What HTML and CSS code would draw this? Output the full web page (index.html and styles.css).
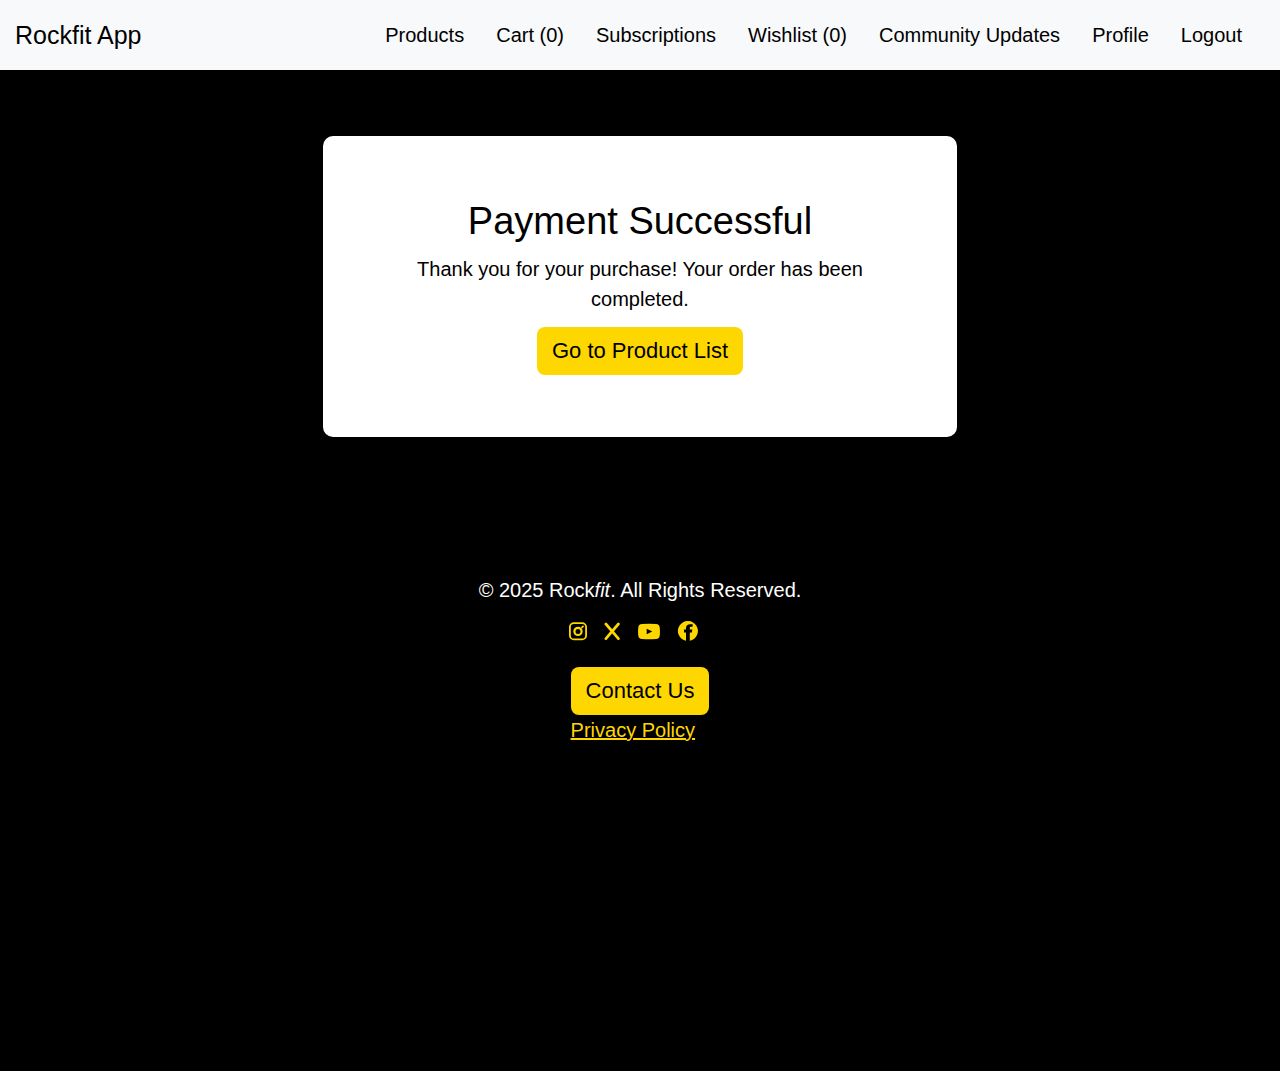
FILE: index.html
```html
<!DOCTYPE html>
<html lang="en">
<head>
<meta charset="utf-8">
<meta name="viewport" content="width=device-width, initial-scale=1">
<title>Rockfit App</title>
<link rel="stylesheet" href="styles.css">
</head>
<body>
<header class="navbar">
  <a class="brand" href="#">Rockfit App</a>
  <nav class="nav">
    <a href="#">Products</a>
    <a href="#">Cart (0)</a>
    <a href="#">Subscriptions</a>
    <a href="#">Wishlist (0)</a>
    <a href="#">Community Updates</a>
    <a href="#">Profile</a>
    <a href="#">Logout</a>
  </nav>
</header>
<main class="main">
  <section class="card">
    <h1>Payment Successful</h1>
    <p>Thank you for your purchase! Your order has been completed.</p>
    <button class="btn" type="button">Go to Product List</button>
  </section>
</main>
<footer class="footer">
  <p class="copyright">© 2025 Rock<em>fit</em>. All Rights Reserved.</p>
  <div class="social">
    <a href="#" aria-label="Instagram"><svg width="20" height="20" viewBox="0 0 20 20" fill="none" stroke="currentColor" stroke-width="1.8"><rect x="1.900" y="2.200" width="16.200" height="16.200" rx="4"/><circle cx="10" cy="10.400" r="3.600" stroke-width="2.200"/><path d="m14 6.400 1-1" stroke-linecap="round"/></svg></a>
    <a href="#" aria-label="X"><svg width="16" height="20" viewBox="0 0 16 20" fill="none" stroke="currentColor" stroke-width="2.700" stroke-linecap="round"><path d="M1.900 3 14.400 17.600M14.400 3 1.900 17.600"/></svg></a>
    <a href="#" aria-label="YouTube"><svg width="24" height="20" viewBox="-2 0 24 20" fill="currentColor"><path fill-rule="evenodd" d="M4 3Q11 2.600 18 3 21.500 3.200 21.700 6.500 22.200 10.500 21.700 14.500 21.500 17.700 18 18 11 18.400 4 18 .5 17.700.3 14.500-.2 10.500.3 6.500.5 3.200 4 3ZM8.700 7.700v5.600l5.500-2.800Z"/></svg></a>
    <a href="#" aria-label="Facebook"><svg width="22" height="20" viewBox="-2 0 22 20" fill="currentColor"><path d="M8 19.800A10 10 0 1 1 11.800 19.800V11.600H13.900L14.300 8.600H11.800V7.200C11.800 6.300 12.200 5.800 13.200 5.800H14.600V3.200H12.400C9.500 3.200 8 4.600 8 7.200V8.600H6V11.600H8Z"/></svg></a>
  </div>
  <div class="links">
    <button class="btn" type="button">Contact Us</button>
    <a class="privacy" href="#">Privacy Policy</a>
  </div>
</footer>
</body>
</html>
```
FILE: styles.css
```css
* { box-sizing: border-box; }
body {
  margin: 0;
  min-height: 100vh;
  background: #000;
  color: #000;
  font: 20px/30px "Liberation Sans", Arial, sans-serif;
}
h1, p { margin: 0; }
.navbar {
  display: flex;
  align-items: center;
  justify-content: space-between;
  min-height: 70px;
  padding: 0 38px 0 15px;
  background: #f8f9fa;
}
.navbar a { color: #000; text-decoration: none; }
.navbar .brand { font-size: 25px; }
.nav { display: flex; gap: 32px; }
.main {
  display: flex;
  justify-content: center;
  padding: 66px 12px;
}
.card {
  width: 634px;
  max-width: 100%;
  padding: 62px;
  border-radius: 10px;
  background: #fff;
  text-align: center;
}
.card h1 {
  margin-bottom: 10px;
  font-size: 38px;
  font-weight: 400;
  line-height: 46px;
}
.card p {
  max-width: 460px;
  margin: 0 auto 13px;
}
.btn {
  display: inline-block;
  height: 48px;
  padding: 0 15px;
  border: 0;
  border-radius: 8px;
  background: #ffd700;
  color: #000;
  font: 22px/30px "Liberation Sans", Arial, sans-serif;
  cursor: pointer;
}
.footer {
  display: flex;
  flex-direction: column;
  align-items: center;
  padding: 72px 12px;
  color: #fff;
}
.social {
  display: flex;
  align-items: center;
  gap: 16px;
  height: 20px;
  margin: 16px 14px 26px 0;
}
.social a { display: flex; color: #ffd700; }
.links {
  display: flex;
  flex-direction: column;
  align-items: flex-start;
}
.privacy { color: #ffd700; }
```
